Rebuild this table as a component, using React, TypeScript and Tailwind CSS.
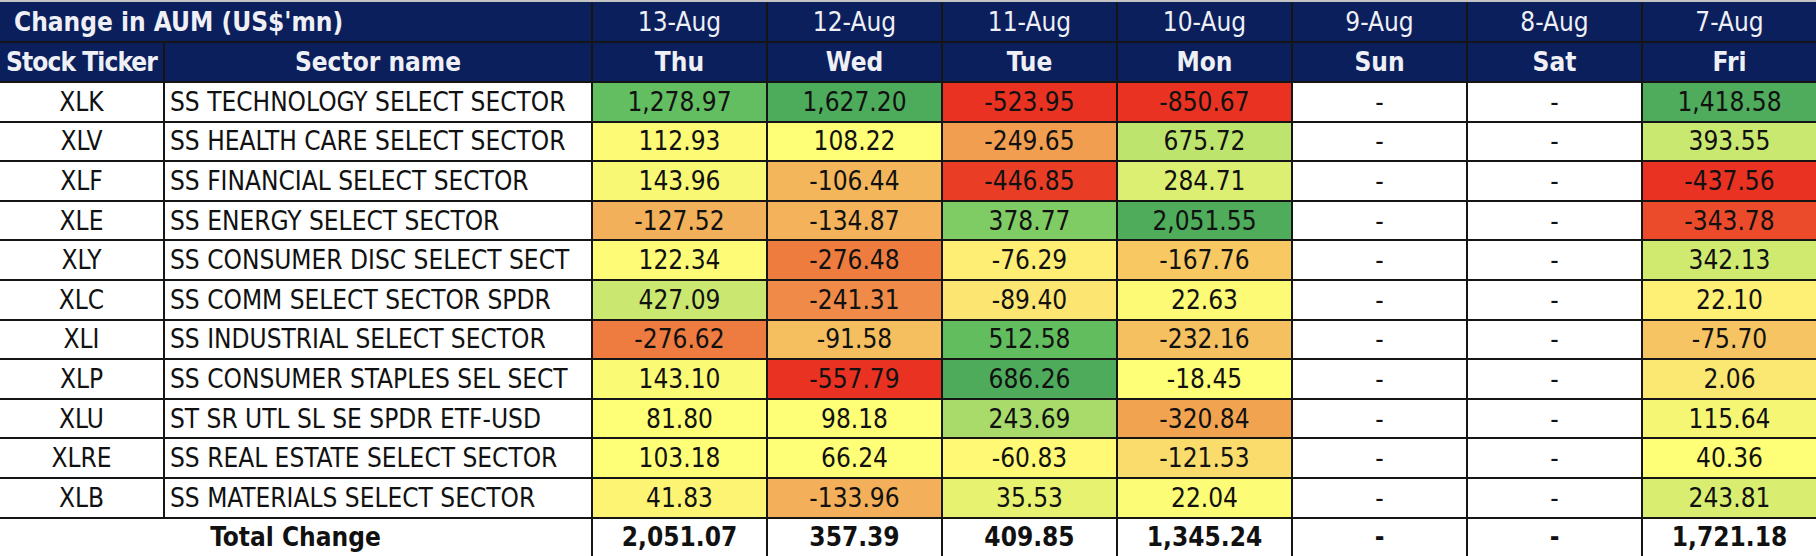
const rows: { ticker: string; sector: string; cells: [string, string][] }[] = [
  {
    ticker: "XLK",
    sector: "SS TECHNOLOGY SELECT SECTOR",
    cells: [["1,278.97", "bg-[#63be62]"], ["1,627.20", "bg-[#4dac5c]"], ["-523.95", "bg-[#e93222]"], ["-850.67", "bg-[#e93222]"], ["1,418.58", "bg-[#4eac5c]"]],
  },
  {
    ticker: "XLV",
    sector: "SS HEALTH CARE SELECT SECTOR",
    cells: [["112.93", "bg-[#fdfb76]"], ["108.22", "bg-[#fefe77]"], ["-249.65", "bg-[#f19e50]"], ["675.72", "bg-[#bde46c]"], ["393.55", "bg-[#c9e86f]"]],
  },
  {
    ticker: "XLF",
    sector: "SS FINANCIAL SELECT SECTOR",
    cells: [["143.96", "bg-[#f9f875]"], ["-106.44", "bg-[#f4b65a]"], ["-446.85", "bg-[#ea3d26]"], ["284.71", "bg-[#dcef72]"], ["-437.56", "bg-[#e93222]"]],
  },
  {
    ticker: "XLE",
    sector: "SS ENERGY SELECT SECTOR",
    cells: [["-127.52", "bg-[#f3b05a]"], ["-134.87", "bg-[#f4b35a]"], ["378.77", "bg-[#80cc64]"], ["2,051.55", "bg-[#4eac5b]"], ["-343.78", "bg-[#eb4a2b]"]],
  },
  {
    ticker: "XLY",
    sector: "SS CONSUMER DISC SELECT SECT",
    cells: [["122.34", "bg-[#fefc76]"], ["-276.48", "bg-[#ee7c3f]"], ["-76.29", "bg-[#feef74]"], ["-167.76", "bg-[#f8c862]"], ["342.13", "bg-[#cfea6f]"]],
  },
  {
    ticker: "XLC",
    sector: "SS COMM SELECT SECTOR SPDR",
    cells: [["427.09", "bg-[#cae86f]"], ["-241.31", "bg-[#f08a48]"], ["-89.40", "bg-[#fde572]"], ["22.63", "bg-[#fdfb76]"], ["22.10", "bg-[#fdf075]"]],
  },
  {
    ticker: "XLI",
    sector: "SS INDUSTRIAL SELECT SECTOR",
    cells: [["-276.62", "bg-[#ee7b3f]"], ["-91.58", "bg-[#f5be5e]"], ["512.58", "bg-[#62bd5f]"], ["-232.16", "bg-[#f5c060]"], ["-75.70", "bg-[#f6c462]"]],
  },
  {
    ticker: "XLP",
    sector: "SS CONSUMER STAPLES SEL SECT",
    cells: [["143.10", "bg-[#fbfa75]"], ["-557.79", "bg-[#e93222]"], ["686.26", "bg-[#4eab5c]"], ["-18.45", "bg-[#fffe77]"], ["2.06", "bg-[#fae872]"]],
  },
  {
    ticker: "XLU",
    sector: "ST SR UTL SL SE SPDR ETF-USD",
    cells: [["81.80", "bg-[#ffff77]"], ["98.18", "bg-[#fffe77]"], ["243.69", "bg-[#a8db69]"], ["-320.84", "bg-[#f1a350]"], ["115.64", "bg-[#f5f774]"]],
  },
  {
    ticker: "XLRE",
    sector: "SS REAL ESTATE SELECT SECTOR",
    cells: [["103.18", "bg-[#ffff77]"], ["66.24", "bg-[#ffff77]"], ["-60.83", "bg-[#fff976]"], ["-121.53", "bg-[#f9dc6c]"], ["40.36", "bg-[#ffff77]"]],
  },
  {
    ticker: "XLB",
    sector: "SS MATERIALS SELECT SECTOR",
    cells: [["41.83", "bg-[#fdf473]"], ["-133.96", "bg-[#f3af59]"], ["35.53", "bg-[#e8f271]"], ["22.04", "bg-[#fdfc76]"], ["243.81", "bg-[#d9ee71]"]],
  },
];

const dates = ["13-Aug", "12-Aug", "11-Aug", "10-Aug", "9-Aug", "8-Aug", "7-Aug"];
const days = ["Thu", "Wed", "Tue", "Mon", "Sun", "Sat", "Fri"];
const totals = ["2,051.07", "357.39", "409.85", "1,345.24", "-", "-", "1,721.18"];

const cell = "border-2 border-[#151515] text-center align-middle p-0 whitespace-nowrap";

export default function App() {
  return (
    <div className="w-[1816px] h-[556px] overflow-hidden bg-white border-t-2 border-[#c4c4c4] font-['DejaVu_Sans_Condensed','Liberation_Sans_Narrow',sans-serif] text-[26px] leading-none text-[#111]">
      <table className="w-[1816px] table-fixed border-collapse border-hidden">
        <colgroup>
          <col className="w-[164px]" />
          <col className="w-[428px]" />
          <col className="w-[175px]" />
          <col className="w-[175px]" />
          <col className="w-[175px]" />
          <col className="w-[175px]" />
          <col className="w-[175px]" />
          <col className="w-[175px]" />
          <col className="w-[174px]" />
        </colgroup>
        <thead className="bg-[#0b1f5d] text-[#eef0f6]">
          <tr className="h-[40px]">
            <th colSpan={2} className="border-2 border-[#151515] pl-[14px] text-left align-middle font-bold whitespace-nowrap">
              Change in AUM (US$'mn)
            </th>
            {dates.map((d) => (
              <th key={d} className={`${cell} font-normal`}>
                {d}
              </th>
            ))}
          </tr>
          <tr className="h-[40px]">
            <th className={`${cell} font-bold tracking-[-0.9px]`}>Stock Ticker</th>
            <th className={`${cell} font-bold`}>Sector name</th>
            {days.map((d) => (
              <th key={d} className={`${cell} font-bold`}>
                {d}
              </th>
            ))}
          </tr>
        </thead>
        <tbody>
          {rows.map((r) => (
            <tr key={r.ticker} className="h-[39.6px]">
              <td className={cell}>{r.ticker}</td>
              <td className="border-2 border-[#151515] pl-[5px] text-left align-middle whitespace-nowrap">{r.sector}</td>
              {r.cells.slice(0, 4).map(([v, bg], i) => (
                <td key={i} className={`${cell} ${bg}`}>
                  {v}
                </td>
              ))}
              <td className={cell}>-</td>
              <td className={cell}>-</td>
              <td className={`${cell} ${r.cells[4][1]}`}>{r.cells[4][0]}</td>
            </tr>
          ))}
          <tr className="h-[38px] font-bold">
            <td colSpan={2} className={cell}>
              Total Change
            </td>
            {totals.map((t, i) => (
              <td key={i} className={cell}>
                {t}
              </td>
            ))}
          </tr>
        </tbody>
      </table>
    </div>
  );
}
